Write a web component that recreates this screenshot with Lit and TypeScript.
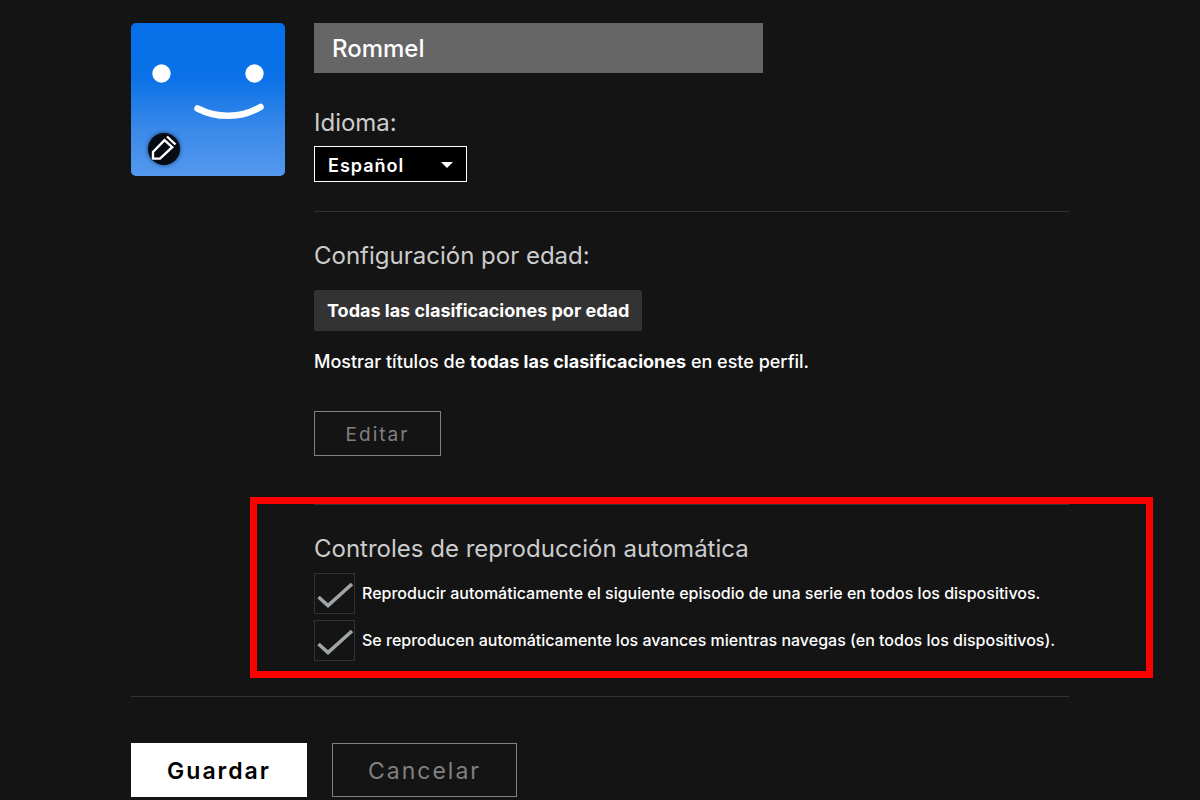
import { LitElement, html, css } from "lit";
import { customElement, state } from "lit/decorators.js";

interface PlaybackOption {
  id: string;
  label: string;
  checked: boolean;
}

@customElement("app-root")
export class AppRoot extends LitElement {
  static styles = css`
    :host {
      display: block;
      min-height: 100vh;
      box-sizing: border-box;
      padding: 23px 24px 0;
      background: #141414;
      color: #fff;
      font-family: Inter, "Liberation Sans", sans-serif;
    }
    *,
    *::before,
    *::after {
      box-sizing: border-box;
    }
    .page {
      max-width: 938px;
      margin: 0 auto;
    }
    .profile {
      display: flex;
      align-items: flex-start;
      gap: 29px;
      padding-bottom: 35px;
      border-bottom: 1px solid #333;
    }
    .avatar {
      position: relative;
      flex: none;
      width: 154px;
      height: 153px;
      padding: 0;
      border: 0;
      border-radius: 5px;
      overflow: hidden;
      background: linear-gradient(#0670e8 0%, #0a71e8 35%, #3b89e9 70%, #5499ef 100%);
      cursor: pointer;
    }
    .face {
      display: block;
      width: 100%;
      height: 100%;
    }
    .pencil {
      position: absolute;
      left: 17px;
      bottom: 11px;
      width: 32px;
      height: 32px;
      border-radius: 50%;
      background: #060b14;
      box-shadow: 0 0 4px rgba(0, 0, 0, 0.6);
    }
    .main {
      flex: 1;
      min-width: 0;
    }
    .name {
      display: block;
      width: 100%;
      max-width: 449px;
      height: 50px;
      padding: 0 18px;
      border: 0;
      border-radius: 0;
      outline: 0;
      background: #666;
      color: #fff;
      font: 500 24px/30px Inter, "Liberation Sans", sans-serif;
    }
    .heading {
      display: block;
      margin: 0;
      color: #ccc;
      font-size: 24px;
      line-height: 30px;
      font-weight: 400;
    }
    .language {
      margin-top: 35px;
    }
    .select-wrap {
      display: inline-grid;
      align-items: center;
      width: 153px;
      margin-top: 8px;
      vertical-align: top;
    }
    .select-wrap > * {
      grid-area: 1 / 1;
    }
    .select {
      appearance: none;
      width: 100%;
      height: 36px;
      padding: 3px 36px 0 13px;
      border: 1px solid #fff;
      border-radius: 0;
      background: #000;
      color: #fff;
      font: 600 18px/24px Inter, "Liberation Sans", sans-serif;
      letter-spacing: 1px;
    }
    .arrow {
      justify-self: end;
      width: 12px;
      height: 6px;
      margin: 2px 14px 0 0;
      pointer-events: none;
    }
    .section {
      position: relative;
      border-top: 1px solid #333;
      margin-top: 29px;
      padding-top: 29px;
    }
    .section.playback {
      margin-top: 48px;
    }
    .rating {
      display: inline-block;
      margin-top: 19px;
      padding: 0 13px;
      border-radius: 2px;
      background: #333;
      font-size: 18px;
      line-height: 41px;
      font-weight: 700;
      vertical-align: top;
    }
    .note {
      margin: 19px 0 0;
      font-size: 18px;
      line-height: 24px;
      font-weight: 500;
    }
    .note b {
      font-weight: 700;
    }
    .edit {
      display: block;
      min-width: 127px;
      height: 45px;
      margin-top: 37px;
      padding: 2px 28px 0;
      font-size: 19px;
      letter-spacing: 2px;
    }
    .outline {
      border: 1px solid #808080;
      background: transparent;
      color: #808080;
    }
    .button {
      font-family: inherit;
      font-weight: 400;
      border-radius: 0;
      cursor: pointer;
    }
    .options {
      display: grid;
      gap: 6px;
      margin-top: 9px;
    }
    .option {
      display: flex;
      align-items: center;
      gap: 7px;
    }
    .box {
      display: grid;
      flex: none;
      width: 41px;
      height: 41px;
    }
    .box > * {
      grid-area: 1 / 1;
    }
    .check {
      appearance: none;
      width: 41px;
      height: 41px;
      margin: 0;
      border: 1px solid #333;
      border-radius: 0;
      background: transparent;
      cursor: pointer;
    }
    .tick {
      display: none;
      width: 41px;
      height: 41px;
      pointer-events: none;
    }
    .check:checked + .tick {
      display: block;
    }
    .option-label {
      padding-bottom: 2px;
      font-size: 16px;
      line-height: 24px;
      font-weight: 500;
    }
    .highlight {
      position: absolute;
      inset: -8px -84px -17px -64px;
      border: 7px solid #f00;
      pointer-events: none;
    }
    .actions {
      display: flex;
      flex-wrap: wrap;
      gap: 25px;
      padding: 46px 0 3px;
    }
    .action {
      height: 54px;
      padding-top: 2px;
      font-size: 23px;
      letter-spacing: 2px;
    }
    .save {
      min-width: 176px;
      border: 0;
      background: #fff;
      color: #000;
      font-weight: 600;
    }
    .cancel {
      min-width: 185px;
    }
  `;

  @state() private options: PlaybackOption[] = [
    {
      id: "next-episode",
      label: "Reproducir automáticamente el siguiente episodio de una serie en todos los dispositivos.",
      checked: true,
    },
    {
      id: "previews",
      label: "Se reproducen automáticamente los avances mientras navegas (en todos los dispositivos).",
      checked: true,
    },
  ];

  private toggle(id: string) {
    this.options = this.options.map((o) => (o.id === id ? { ...o, checked: !o.checked } : o));
  }

  private renderOption(option: PlaybackOption) {
    return html`
      <div class="option">
        <span class="box">
          <input
            class="check"
            type="checkbox"
            id=${option.id}
            .checked=${option.checked}
            @change=${() => this.toggle(option.id)}
          />
          <svg class="tick" viewBox="0 0 41 41" aria-hidden="true">
            <path d="M4.5 24 14 32.5 38 11" fill="none" stroke="#a0a5a8" stroke-width="3.6" />
          </svg>
        </span>
        <label class="option-label" for=${option.id}>${option.label}</label>
      </div>
    `;
  }

  render() {
    return html`
      <main class="page">
        <div class="profile">
          <button class="avatar" type="button" aria-label="Cambiar imagen de perfil">
            <svg class="face" viewBox="0 0 154 153" aria-hidden="true">
              <circle cx="30.5" cy="50.5" r="9.2" fill="#fff" />
              <circle cx="123.5" cy="50.5" r="9.2" fill="#fff" />
              <path
                d="M66.5 85.5C86 95.5 110 95.5 129.5 84"
                fill="none"
                stroke="#fff"
                stroke-width="6.5"
                stroke-linecap="round"
              />
            </svg>
            <svg class="pencil" viewBox="0 0 32 32" aria-hidden="true">
              <g fill="none" stroke="#fff" stroke-width="2.4">
                <path d="M16.5 7.2 24.2 14.2 12 25.6 5 25.6 5 19Z" />
                <path d="M19 3.5 27.5 11.5" />
              </g>
            </svg>
          </button>
          <div class="main">
            <input class="name" type="text" value="Rommel" aria-label="Nombre del perfil" />
            <div class="language">
              <label class="heading" for="language">Idioma:</label>
              <span class="select-wrap">
                <select class="select" id="language">
                  <option selected>Español</option>
                </select>
                <svg class="arrow" viewBox="0 0 12 6" aria-hidden="true">
                  <path d="M0 0H12L6 6Z" fill="#fff" />
                </svg>
              </span>
            </div>
            <section class="section">
              <h2 class="heading">Configuración por edad:</h2>
              <span class="rating">Todas las clasificaciones por edad</span>
              <p class="note">
                Mostrar títulos de <b>todas las clasificaciones</b> en este perfil.
              </p>
              <button class="button outline edit" type="button">Editar</button>
            </section>
            <section class="section playback">
              <h2 class="heading">Controles de reproducción automática</h2>
              <div class="options">${this.options.map((o) => this.renderOption(o))}</div>
              <div class="highlight"></div>
            </section>
          </div>
        </div>
        <div class="actions">
          <button class="button action save" type="button">Guardar</button>
          <button class="button outline action cancel" type="button">Cancelar</button>
        </div>
      </main>
    `;
  }
}
